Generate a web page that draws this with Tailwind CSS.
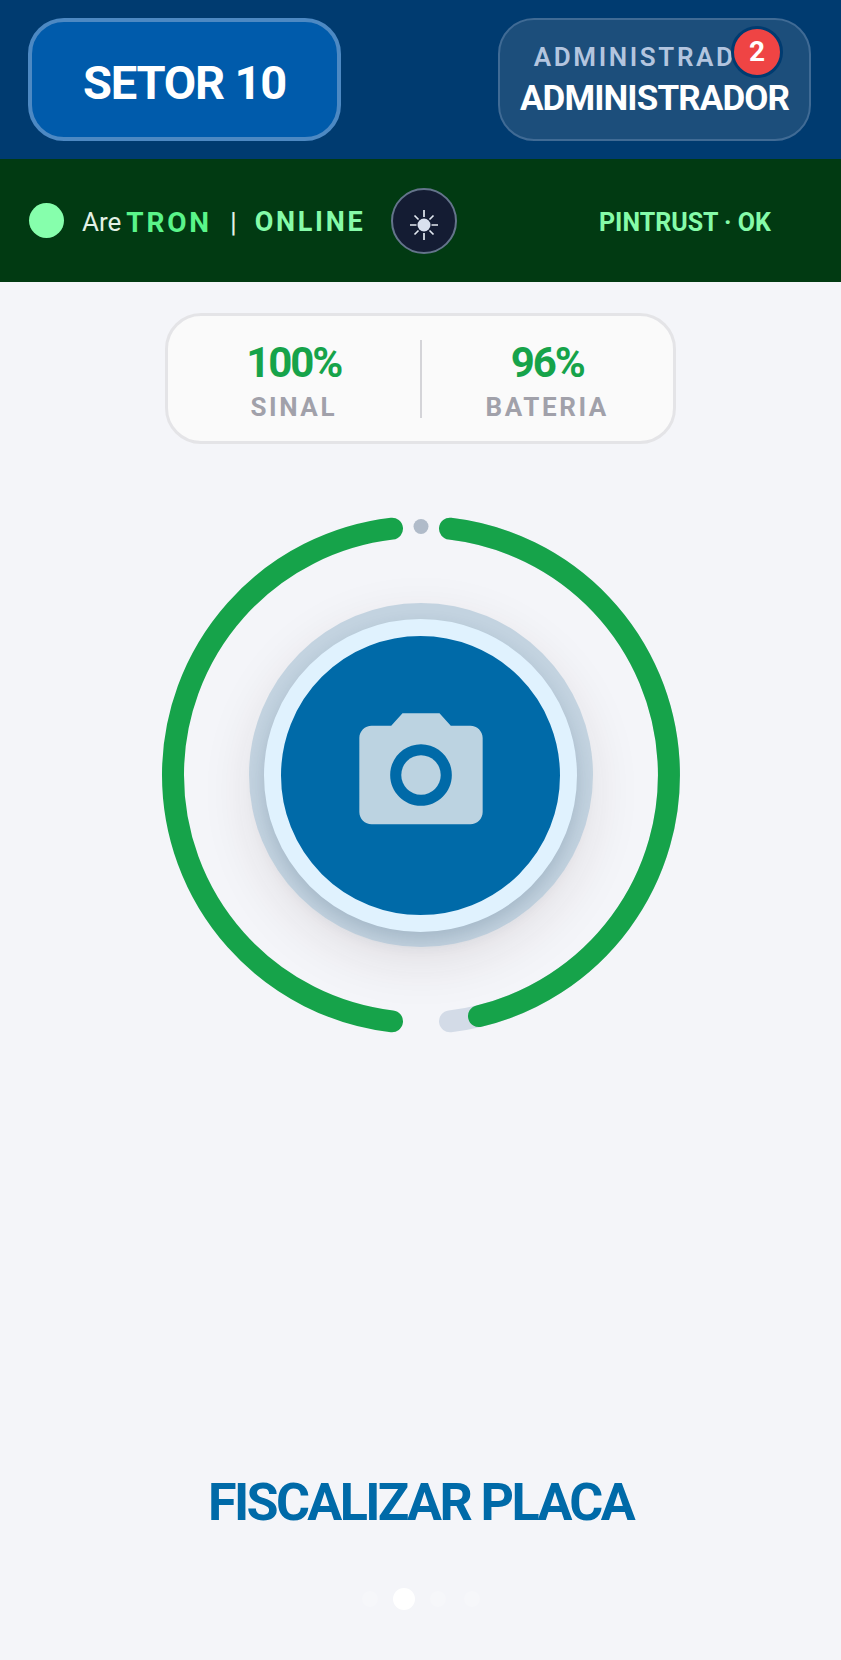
<!DOCTYPE html>
<html lang="pt-BR">
<head>
  <meta charset="UTF-8" />
  <meta name="viewport" content="width=device-width, initial-scale=1.0"/>
  <title>AreTRON - Fiscalizar Placa</title>
  <script src="https://cdn.jsdelivr.net/npm/@tailwindcss/browser@4"></script>
</head>
<body class="bg-[#f4f5f9] font-[Roboto,sans-serif] min-h-screen flex flex-col">
  <header class="bg-[#003b70] text-white flex justify-between pl-[28px] pr-[30px] py-[18px]">
    <button class="w-[313px] h-[123px] rounded-[36px] border-4 border-[#4d89c3] bg-[#005bab] text-[47px] font-bold tracking-tight pt-2">SETOR 10</button>
    <button class="relative w-[313px] h-[123px] rounded-[36px] border-2 border-[#406b95] bg-[#1c4e7b] flex flex-col items-center justify-center pt-[2px]">
      <span class="text-[26px] leading-[36px] font-semibold tracking-widest text-[#b3c5df]">ADMINISTRADOR</span>
      <span class="text-[35px] leading-[48px] font-bold tracking-tight">ADMINISTRADOR</span>
      <span class="absolute top-[6px] right-[26px] size-[52px] rounded-full border-[3px] border-[#003b70] bg-[#ef4444] flex items-center justify-center text-[28px] font-bold">2</span>
    </button>
  </header>

  <section class="bg-[#013a12] h-[123px] flex items-center px-[29px] text-[28px]">
    <span class="size-[35px] rounded-full bg-[#86ffac]"></span>
    <p class="ml-[18px] pt-1 flex items-center">
      <span class="text-[26px] text-[#e3f1e5]">Are</span>
      <span class="ml-[5px] font-bold tracking-widest text-[#5af58a]">TRON</span>
      <span class="ml-[18px] text-[#e3f1e5]">|</span>
      <span class="ml-[18px] text-[27px] font-bold tracking-widest text-[#86fba9]">ONLINE</span>
    </p>
    <button aria-label="Alternar tema" class="ml-[26px] size-[66px] rounded-full border-2 border-[#64748b] bg-[#141c33] flex items-center justify-center">
      <svg viewBox="0 0 32 32" class="size-8 mt-2" fill="none" stroke="#e2e8f0" stroke-width="1.700">
        <circle cx="16" cy="16" r="6.500" fill="#d9e0ee" stroke="none"/>
        <path d="M16 1v7M16 24v7M2 16h6.500M23.500 16h6.500M6.500 6.500l4 4M21.500 21.500l4 4M6.500 25.500l4-4M21.500 10.500l4-4"/>
      </svg>
    </button>
    <span class="ml-auto mr-[41px] pt-1 text-[25px] font-bold text-[#86fba9]">PINTRUST · OK</span>
  </section>

  <main class="flex-1 flex flex-col items-center">
    <div class="mt-[31px] w-[511px] h-[131px] rounded-[36px] border-[3px] border-[#e4e4e7] bg-[#fafafa] flex items-center text-center">
      <div class="flex-1 pt-2">
        <p class="text-[42px] leading-[48px] font-bold tracking-tighter text-[#16a34a]">100%</p>
        <p class="text-[26px] leading-[40px] font-bold tracking-widest text-[#a1a1aa]">SINAL</p>
      </div>
      <div class="w-[2px] h-[78px] bg-[#d4d4d8]"></div>
      <div class="flex-1 pt-2">
        <p class="text-[42px] leading-[48px] font-bold tracking-tighter text-[#16a34a]">96%</p>
        <p class="text-[26px] leading-[40px] font-bold tracking-widest text-[#a1a1aa]">BATERIA</p>
      </div>
    </div>

    <div class="mt-[71px] grid place-items-center">
      <!-- left arc: signal, right arc: battery -->
      <svg viewBox="0 0 520 520" class="col-start-1 row-start-1 size-[520px]" fill="none" stroke-width="22" stroke-linecap="round">
        <path d="M289 13.700A248 248 0 0 1 289 506.300" stroke="#d3dbe7"/>
        <path d="M231 506.300A248 248 0 0 1 231 13.700" stroke="#16a34a"/>
        <path d="M289 13.700A248 248 0 0 1 318 501.100" stroke="#16a34a"/>
        <circle cx="260" cy="11.500" r="7.500" fill="#b0bbc9"/>
      </svg>
      <button aria-label="Fiscalizar placa" class="col-start-1 row-start-1 size-[344px] rounded-full bg-[#c3d3e0] shadow-[0_16px_50px_rgba(60,30,30,0.1)] flex items-center justify-center">
        <span class="size-[313px] rounded-full border-[17px] border-[#e0f2fe] bg-[#006aa8] shadow-[0_8px_18px_rgba(30,60,90,0.18)] flex items-center justify-center">
          <svg viewBox="0 0 24 24" class="size-[148px]" fill="#bcd3e1">
            <circle cx="12" cy="12" r="3.200"/>
            <path d="M9 2L7.170 4H4c-1.100 0-2 .9-2 2v12c0 1.100.9 2 2 2h16c1.100 0 2-.9 2-2V6c0-1.100-.9-2-2-2h-3.170L15 2H9zm3 15c-2.760 0-5-2.240-5-5s2.240-5 5-5 5 2.240 5 5-2.240 5-5 5z"/>
          </svg>
        </span>
      </button>
    </div>

    <h1 class="mt-auto text-[52px] leading-[64px] font-bold tracking-tighter text-[#006aa8]">FISCALIZAR PLACA</h1>
    <nav aria-label="Telas" class="mt-[56px] mb-[53px] flex gap-[18px]">
      <button aria-label="Tela 1" class="size-4 rounded-full bg-white/20"></button>
      <button aria-label="Tela 2" class="size-4 rounded-full bg-white ring-[3px] ring-white"></button>
      <button aria-label="Tela 3" class="size-4 rounded-full bg-white/20"></button>
      <button aria-label="Tela 4" class="size-4 rounded-full bg-white/20"></button>
    </nav>
  </main>
</body>
</html>
